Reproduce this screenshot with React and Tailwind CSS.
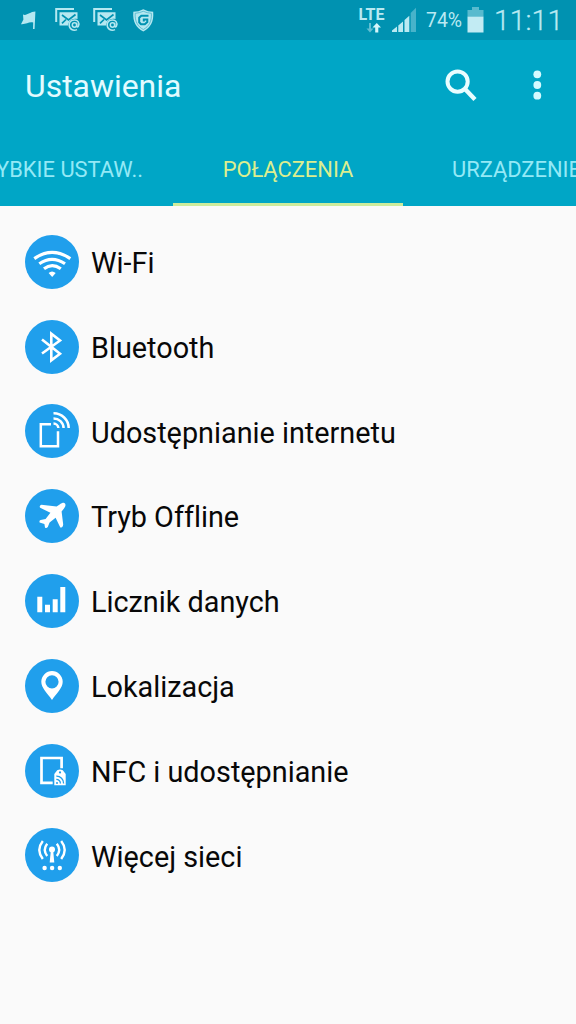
const WifiIcon = () => (
  <g fill="none" stroke="#fff" strokeWidth="3.2">
    <path d="M9.3 23.6Q27 11.3 45.3 23.6" />
    <path d="M14.3 28.8Q27 19.8 40 28.8" />
    <path d="M19 33.7Q27 27.4 35.8 33.7" />
    <path d="M23.6 38Q27 34.8 30.7 38L27.2 42Z" fill="#fff" stroke="none" />
  </g>
);

const BluetoothIcon = () => (
  <path
    d="M17 19.5L35 33.7L26.3 40.3V13.7L35 20.5L17 33.5"
    fill="none"
    stroke="#fff"
    strokeWidth="2.6"
  />
);

const HotspotIcon = () => (
  <g fill="none" stroke="#fff" strokeWidth="2.5">
    <path d="M26 20.3H15.8V42.3H33V27.2" />
    <path d="M28.5 9.3A15 15 0 0 1 43.7 24" />
    <path d="M28.5 14.4A10 10 0 0 1 38.6 24" />
    <path d="M28.5 19.5A5 5 0 0 1 33.4 24" />
  </g>
);

const PlaneIcon = () => (
  <path
    d="M40 14.4C41 15.8 40.4 17.8 39 19.4L36.6 22.4L38.2 35.4Q37.8 38.6 35.3 38.6L30.6 28.8L24.6 33.4L22.8 38Q21.2 39.6 20 38.4L19.4 35L14.6 33.4Q14 31.6 15.6 31L20.6 30L25.4 23.8L15.2 18.8Q13.8 16.6 16.4 15.8L31.6 17.6L35 15.2C37 13.8 39 13.2 40 14.4Z"
    fill="#fff"
  />
);

const DataIcon = () => (
  <path
    d="M12.3 22.7h5v15.6h-5zM20 30.7h5v7.6h-5zM27.7 25.3h5v13h-5zM35.3 13h5v25.3h-5z"
    fill="#fff"
  />
);

const PinIcon = () => (
  <path
    d="M27 12A10.7 10.7 0 0 0 16.3 22.7C16.3 29 22 33.5 27 41C32 33.5 37.7 29 37.7 22.7A10.7 10.7 0 0 0 27 12ZM27 16.2A6.6 6.6 0 1 1 27 29.4A6.6 6.6 0 1 1 27 16.2Z"
    fill="#fff"
    fillRule="evenodd"
  />
);

const NfcIcon = () => (
  <g fill="none">
    <path d="M36.6 24.3V14H16.5V38.9H27.7" stroke="#fff" strokeWidth="2.7" />
    <path d="M29.3 30L32.2 26.2Q35 24.6 37.8 26.2L40.7 30V41.3H29.3Z" fill="#fff" />
    <circle cx="35" cy="28.4" r="1.1" fill="#209fec" />
    <path d="M31.3 32.2A7 7 0 0 1 38.6 39.5M31.3 35.4A4 4 0 0 1 35.4 39.5" stroke="#209fec" strokeWidth="1.3" />
    <circle cx="32" cy="39" r="1" fill="#209fec" />
  </g>
);

const NetworkIcon = () => (
  <g fill="none" stroke="#fff" strokeWidth="2.4">
    <circle cx="27" cy="21.6" r="3" fill="#fff" stroke="none" />
    <path d="M25.8 23h2.4l1.1 11.5h-4.6z" fill="#fff" stroke="none" />
    <path d="M22.2 15.8Q17.4 21.8 22.2 28M31.8 15.8Q36.6 21.8 31.8 28" />
    <path d="M17.8 12.9Q10.8 21.8 17.8 30.9M36.2 12.9Q43.2 21.8 36.2 30.9" />
    <g fill="#fff" stroke="none">
      <circle cx="19.6" cy="40" r="2.2" />
      <circle cx="27.1" cy="40" r="2.2" />
      <circle cx="34.8" cy="40" r="2.2" />
    </g>
  </g>
);

const items = [
  { label: "Wi-Fi", icon: WifiIcon },
  { label: "Bluetooth", icon: BluetoothIcon },
  { label: "Udostępnianie internetu", icon: HotspotIcon },
  { label: "Tryb Offline", icon: PlaneIcon },
  { label: "Licznik danych", icon: DataIcon },
  { label: "Lokalizacja", icon: PinIcon },
  { label: "NFC i udostępnianie", icon: NfcIcon },
  { label: "Więcej sieci", icon: NetworkIcon },
];

const MailIcon = () => (
  <svg width="26" height="26" viewBox="0 0 26 26" fill="none">
    <path d="M1.2 15V2H19" stroke="#b5e8f1" strokeWidth="2" />
    <path d="M4.5 5.3H22.5V12C17 10.5 13.3 14 13.2 18.5H4.5Z" fill="#b5e8f1" />
    <path d="M7 8L13.5 13L20.5 7.5M7 16.3L11 12.5" stroke="#0092b1" strokeWidth="1.7" />
    <circle cx="19.5" cy="18" r="2.2" stroke="#b5e8f1" strokeWidth="1.5" />
    <path d="M21.7 15.8V19Q22.2 20.7 23.4 19.3C25.2 15.5 22.3 12.7 19.3 12.9C16 13.1 14.2 15.4 14.2 18C14.2 22.2 18.2 24.2 22 22.6" stroke="#b5e8f1" strokeWidth="1.5" />
  </svg>
);

const StatusBar = () => (
  <div className="flex h-10 items-center justify-between bg-[#0092b1] pr-[14px] pl-[20px] text-[#b9e9f2]">
    <div className="flex items-center">
      <svg width="17" height="20" viewBox="0 0 17 20">
        <path d="M3 4.6C7 6.2 9.5 1.8 15.4 1.6L14.6 19H13L13.2 12.6C9 11.4 6.5 14.6 1 14.2L3.4 9.6Z" fill="#b5e8f1" />
      </svg>
      <div className="ml-[18px] flex gap-[12px]">
        <MailIcon />
        <MailIcon />
      </div>
      <svg className="ml-[13px]" width="23" height="25" viewBox="0 0 23 25" fill="none">
        <path d="M11.3 1.2Q16 3.7 21.2 3.8C22 14 18.5 20 11.3 23.5C4 20 .6 14 1.3 3.8Q6.5 3.7 11.3 1.2Z" fill="#b5e8f1" />
        <path d="M11.3 3.3Q15 5 19.4 5.3C19.8 13.5 17 18.4 11.3 21.5C5.6 18.4 2.8 13.5 3.2 5.3Q7.5 5 11.3 3.3Z" stroke="#4ab5cb" strokeWidth=".8" />
        <path d="M16.5 7.8H9.3L7.2 9.8V14.3L9 16.2H12.8L15.3 14V11.4H11.8V13.5" stroke="#0092b1" strokeWidth="2" />
      </svg>
    </div>
    <div className="flex items-center">
      <div className="flex w-[27px] flex-col items-center">
        <span className="pt-px text-[16px] leading-[13px] font-bold">LTE</span>
        <svg className="mt-px ml-[3px]" width="15" height="12" viewBox="0 0 15 12">
          <path d="M3 1H5V6.5H7.5L4 10.5L.5 6.5H3Z" fill="#61bed2" />
          <path d="M9.2 10.5V5.5H6.5L10.8 1L15 5.5H12.3V10.5Z" fill="#d5f5fa" />
        </svg>
      </div>
      <svg className="ml-[6px]" width="27" height="26" viewBox="0 0 27 26">
        <path d="M1 25V23.5L6 19.5V25ZM7.3 25V18.5L12 14.5V25ZM13.5 25V13L18.3 8.8V25Z" fill="#b9e9f2" />
        <path d="M19.7 25V6L25 .8V25Z" fill="#48b3ca" />
      </svg>
      <span className="ml-[8px] w-[36px] pt-[2px] text-[19.4px] leading-none whitespace-nowrap">74%</span>
      <svg className="ml-[5px]" width="17" height="26" viewBox="0 0 17 26">
        <path d="M5 0H12V3H16.5V9.5H.5V3H5Z" fill="#58bace" />
        <path d="M.5 9.5H16.5V25.5H.5Z" fill="#c2ebf3" />
      </svg>
      <span className="ml-[10px] w-[68px] pt-[2px] text-[28.5px] leading-none font-light [-webkit-text-stroke:0.3px_#b9e9f2]">
        11:11
      </span>
    </div>
  </div>
);

const Header = () => (
  <header className="h-[166px] bg-[#00a6c6]">
    <div className="flex h-[89px] items-center justify-between pr-[26px] pl-[25px]">
      <h1 className="pt-[5px] text-[31.9px] leading-none text-[#e3fbff]">Ustawienia</h1>
      <div className="flex items-center">
        <svg width="34" height="34" viewBox="0 0 34 34" fill="none" stroke="#e9fdff">
          <circle cx="13.6" cy="13.6" r="10.1" strokeWidth="4" />
          <path d="M20.5 20.5L31 31.5" strokeWidth="4.4" />
        </svg>
        <svg className="ml-[46px]" width="26" height="32" viewBox="0 0 26 32" fill="#d5faff">
          <circle cx="13.3" cy="5.3" r="3.9" />
          <circle cx="13.3" cy="16" r="3.9" />
          <circle cx="13.3" cy="26.7" r="3.9" />
        </svg>
      </div>
    </div>
    <nav className="flex h-[77px] justify-center overflow-hidden text-[21.9px] text-[#94e9f6]">
      <div className="flex w-[230px] shrink-0 justify-end pt-[27px] pr-[30px] leading-[28px] whitespace-nowrap">
        SZYBKIE USTAW..
      </div>
      <div className="flex w-[230px] shrink-0 justify-center border-b-[3px] border-[#cdec9c] pt-[27px] leading-[28px] text-[#dcee8f]">
        POŁĄCZENIA
      </div>
      <div className="flex w-[230px] shrink-0 pt-[27px] pl-[49px] leading-[28px] whitespace-nowrap">
        URZĄDZENIE
      </div>
    </nav>
  </header>
);

const App = () => (
  <div className="h-[1024px] w-[576px] overflow-hidden bg-[#fafafa] font-['Roboto',sans-serif]">
    <StatusBar />
    <Header />
    <ul className="flex flex-col pt-[13.5px]">
      {items.map((item) => (
        <li key={item.label} className="flex h-[84.8px] items-center pl-[25px]">
          <svg width="54" height="54" viewBox="0 0 54 54" className="shrink-0">
            <circle cx="27" cy="27" r="27" fill="#209fec" />
            <item.icon />
          </svg>
          <span className="ml-[12px] pt-[3px] text-[28.8px] leading-none whitespace-nowrap text-[#080808] [font-variant-ligatures:none]">
            {item.label}
          </span>
        </li>
      ))}
    </ul>
  </div>
);

export default App;
